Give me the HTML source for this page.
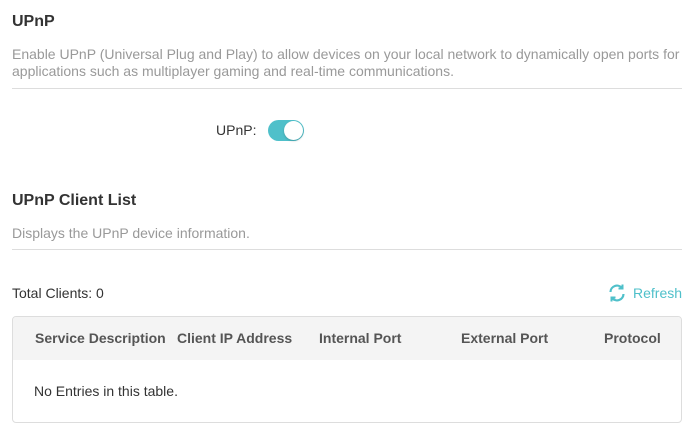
<!DOCTYPE html>
<html><head><style>
body{margin:0;width:697px;height:448px;background:#fff;font-family:"Liberation Sans",sans-serif;position:relative;overflow:hidden}
.a{position:absolute;white-space:nowrap}
h2{position:absolute;margin:0;font-size:16px;font-weight:bold;color:#333}
.d{color:#999;font-size:14px;line-height:17px}
.hr{position:absolute;left:12px;width:670px;height:1px;background:#ddd}
.th{font-size:14px;font-weight:bold;color:#555;top:330px}
</style></head><body>
<h2 style="left:12px;top:13px">UPnP</h2>
<div class="a d" style="left:12px;top:46px">Enable UPnP (Universal Plug and Play) to allow devices on your local network to dynamically open ports for<br>applications such as multiplayer gaming and real-time communications.</div>
<div class="hr" style="top:88px"></div>
<div class="a" style="left:216px;top:122px;font-size:14px;color:#333">UPnP:</div>
<div class="a" style="left:268px;top:120px;width:36px;height:21px;border-radius:11px;background:#4fc0ca"></div>
<div class="a" style="left:284px;top:121px;width:19px;height:19px;border-radius:50%;background:#fff;box-shadow:0 1px 2px rgba(0,0,0,.2)"></div>
<h2 style="left:12px;top:192px">UPnP Client List</h2>
<div class="a d" style="left:12px;top:225px">Displays the UPnP device information.</div>
<div class="hr" style="top:249px"></div>
<div class="a" style="left:12px;top:285px;font-size:14px;color:#333">Total Clients: 0</div>
<svg class="a" style="left:607px;top:283px" width="20" height="20" viewBox="0 0 20 20" fill="none" stroke="#4fc0ca" stroke-width="2.2"><path d="M3.5 9A6.5 6.5 0 0 1 15 5"/><path d="M16.5 11A6.5 6.5 0 0 1 5 15"/><path d="M15.5 1.5V5.5H11.5" stroke-width="2"/><path d="M4.5 18.5V14.5H8.5" stroke-width="2"/></svg>
<div class="a" style="left:633px;top:285px;font-size:14px;color:#4fc0ca">Refresh</div>
<div class="a" style="left:12px;top:316px;width:668px;height:105px;border:1px solid #ddd;border-radius:4px;overflow:hidden">
<div style="height:43px;background:#f4f4f4"></div></div>
<div class="a th" style="left:35px">Service Description</div>
<div class="a th" style="left:177px">Client IP Address</div>
<div class="a th" style="left:319px">Internal Port</div>
<div class="a th" style="left:461px">External Port</div>
<div class="a th" style="left:604px">Protocol</div>
<div class="a" style="left:34px;top:383px;font-size:14px;color:#333">No Entries in this table.</div>
</body></html>
